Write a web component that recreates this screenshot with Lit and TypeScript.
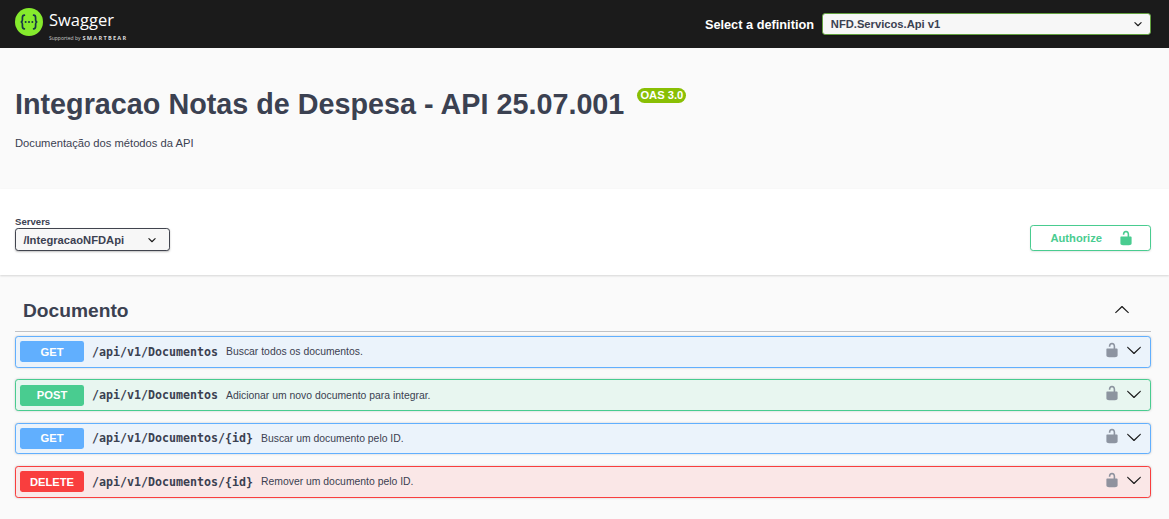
import { LitElement, html, css, svg } from "lit";
import { customElement } from "lit/decorators.js";

const chevron = svg`<path d="M17.418 6.109c.272-.268.709-.268.979 0s.271.701 0 .969l-7.908 7.83c-.27.268-.707.268-.979 0l-7.908-7.83c-.27-.268-.27-.701 0-.969.271-.268.709-.268.979 0L10 13.25l7.418-7.141z"/>`;
const small = svg`<path d="M13.418 7.859a.695.695 0 0 1 .978 0 .68.68 0 0 1 0 .969l-3.908 3.83a.697.697 0 0 1-.979 0l-3.908-3.83a.68.68 0 0 1 0-.969.695.695 0 0 1 .978 0L10 11l3.418-3.141z"/>`;
const lock = svg`<path d="M15.8 8H14V5.6C14 2.703 12.665 1 10 1 7.334 1 6 2.703 6 5.6V6h2v-.801C8 3.754 8.797 3 10 3c1.203 0 2 .754 2 2.199V8H4c-.553 0-1 .646-1 1.199V17c0 .549.428 1.139.951 1.307l1.197.387C5.672 18.861 6.55 19 7.1 19h5.8c.549 0 1.428-.139 1.951-.307l1.196-.387c.524-.167.953-.757.953-1.306V9.199C17 8.646 16.352 8 15.8 8z"/>`;

const ops = [
  { m: "GET", c: "get", p: "/api/v1/Documentos", s: "Buscar todos os documentos." },
  { m: "POST", c: "post", p: "/api/v1/Documentos", s: "Adicionar um novo documento para integrar." },
  { m: "GET", c: "get", p: "/api/v1/Documentos/{id}", s: "Buscar um documento pelo ID." },
  { m: "DELETE", c: "del", p: "/api/v1/Documentos/{id}", s: "Remover um documento pelo ID." },
];

@customElement("app-root")
export class AppRoot extends LitElement {
  static styles = css`
    :host { display: block; min-height: 519px; background: #fafafa; font-family: "Liberation Sans", Arial, sans-serif; color: #3b4151; overflow: hidden; }
    .topbar { height: 48px; background: #1b1b1b; display: flex; align-items: center; padding: 0 18px 0 15px; box-sizing: border-box; }
    .logo { display: flex; align-items: flex-start; gap: 6px; flex: 1; color: #fff; height: 48px; padding-top: 8px; box-sizing: border-box; }
    .logo svg { display: block; }
    .brand { display: flex; flex-direction: column; font-family: "Open Sans", sans-serif; }
    .brand .name { font-size: 16.5px; line-height: 22px; font-weight: 400; margin-top: 1px; white-space: nowrap; }
    .brand .sup { display: flex; align-items: baseline; gap: 2px; font-size: 5px; line-height: 8px; margin-top: 3px; color: #ccc; white-space: nowrap; }
    .brand .sup b { font-size: 5.6px; font-weight: 700; letter-spacing: 1.25px; color: #ddd; }
    .deflabel { color: #fff; font-weight: 700; font-size: 12.75px; margin-right: 8px; }
    .defsel { width: 329px; height: 22px; box-sizing: border-box; border: 1.6px solid #62a03f; border-radius: 3.2px; background: #f7f7f7; display: flex; align-items: center; justify-content: space-between; padding: 0 4px 0 7.8px; font-weight: 700; font-size: 11.2px; box-shadow: 0 1px 2px rgba(0,0,0,.25); }
    .defsel svg, .srvsel svg { width: 16px; height: 16px; fill: #1b1b1b; display: block; }
    .info { height: 141px; box-sizing: border-box; padding: 0 15px; overflow: hidden; }
    .title { display: flex; align-items: flex-start; margin: 40px 0 0; font-size: 28.75px; line-height: 33px; font-weight: 700; white-space: nowrap; }
    .badge { background: #89bf04; color: #fff; font-size: 11.2px; line-height: 13px; font-weight: 700; height: 15px; padding: 1px 3px; box-sizing: border-box; border-radius: 46px; margin: 0 0 0 13px; width: 49px; text-align: center; white-space: nowrap; font-family: "Liberation Sans", sans-serif; }
    .desc { font-size: 11.2px; line-height: 14px; margin-top: 15px; }
    .scheme { height: 86px; box-sizing: border-box; background: #fff; box-shadow: 0 1px 2px rgba(0,0,0,.15); padding: 27px 18px 0 15px; display: flex; justify-content: space-between; align-items: flex-start; }
    .srvlabel { font-size: 9.6px; line-height: 12px; font-weight: 700; }
    .srvsel { width: 155px; height: 23px; box-sizing: border-box; border: 1.6px solid #41444e; border-radius: 3.2px; background: #f7f7f7; display: flex; align-items: center; justify-content: space-between; padding: 0 9px 0 7.4px; font-weight: 700; font-size: 11.2px; box-shadow: 0 1px 2px rgba(0,0,0,.25); }
    .auth { width: 121px; height: 26px; margin-top: 9px; box-sizing: border-box; border: 1.6px solid #49cc90; border-radius: 3.2px; color: #49cc90; font-weight: 700; font-size: 11.2px; display: flex; align-items: center; justify-content: flex-end; gap: 16px; padding-right: 16px; box-shadow: 0 1px 2px rgba(0,0,0,.1); background: #fff; }
    .auth svg { width: 16px; height: 16px; fill: #49cc90; display: block; }
    .content { padding: 0 18px 0 15px; }
    .tag { height: 57px; box-sizing: border-box; border-bottom: 1px solid rgba(59,65,81,.3); display: flex; align-items: center; justify-content: space-between; padding: 13px 21px 0 8px; }
    .tag h3 { font-size: 19.2px; line-height: 24px; font-weight: 700; margin: 0 0 -3px; }
    .tag svg { width: 16px; height: 16px; fill: #1b1b1b; transform: rotate(180deg); display: block; }
    .ops { display: flex; flex-direction: column; padding-top: 4px; }
    .op { height: 31.6px; box-sizing: border-box; border: 1px solid; border-radius: 3.2px; display: flex; align-items: center; padding: 0 8px 0 4px; margin-bottom: 11.73px; box-shadow: 0 0 2.4px rgba(0,0,0,.19); }
    .op.get { border-color: #61affe; background: #ebf3fb; }
    .op.post { border-color: #49cc90; background: #e8f6f0; }
    .op.del { border-color: #f93e3e; background: #fae7e7; }
    .m { width: 64px; height: 21px; border-radius: 2.4px; color: #fff; font-size: 11.2px; font-weight: 700; display: flex; align-items: center; justify-content: center; flex: none; }
    .get .m { background: #61affe; }
    .post .m { background: #49cc90; }
    .del .m { background: #f93e3e; }
    .path { font-family: "DejaVu Sans Mono", monospace; font-size: 11.63px; font-weight: 700; margin-left: 8px; white-space: nowrap; }
    .sum { font-size: 10.4px; margin-left: 8px; flex: 1; white-space: nowrap; }
    .l { width: 16px; height: 16px; fill: #7d8492; opacity: .85; display: block; margin-top: -4px; }
    .c { width: 16px; height: 16px; fill: #1b1b1b; display: block; margin-left: 6px; margin-top: -3px; }
  `;

  render() {
    return html`
      <div class="topbar">
        <div class="logo">
          <svg width="28" height="28" viewBox="0 0 28 28">
            <circle cx="14" cy="14" r="14" fill="#85ea2d"/>
            <g fill="none" stroke="#173646" stroke-width="1.7" stroke-linecap="round">
              <path d="M9.4 7.2c-1.9 0-2 1.1-2 2.5v2.3c0 1-.5 1.8-1.6 2 1.1.2 1.6 1 1.6 2v2.3c0 1.4.1 2.5 2 2.5"/>
              <path d="M18.6 7.2c1.9 0 2 1.1 2 2.5v2.3c0 1 .5 1.8 1.6 2-1.1.2-1.6 1-1.6 2v2.3c0 1.4-.1 2.5-2 2.5"/>
            </g>
            <g fill="#173646"><circle cx="10.6" cy="14" r="1"/><circle cx="14" cy="14" r="1"/><circle cx="17.4" cy="14" r="1"/></g>
          </svg>
          <div class="brand">
            <div class="name">Swagger</div>
            <div class="sup">Supported by <b>SMARTBEAR</b></div>
          </div>
        </div>
        <span class="deflabel">Select a definition</span>
        <div class="defsel"><span>NFD.Servicos.Api v1</span><svg viewBox="0 0 20 20">${small}</svg></div>
      </div>
      <section class="info">
        <h2 class="title">Integracao Notas de Despesa - API 25.07.001<span class="badge">OAS 3.0</span></h2>
        <div class="desc">Documentação dos métodos da API</div>
      </section>
      <section class="scheme">
        <div>
          <div class="srvlabel">Servers</div>
          <div class="srvsel"><span>/IntegracaoNFDApi</span><svg viewBox="0 0 20 20">${small}</svg></div>
        </div>
        <div class="auth"><span>Authorize</span><svg viewBox="0 0 20 20">${lock}</svg></div>
      </section>
      <section class="content">
        <div class="tag"><h3>Documento</h3><svg viewBox="0 0 20 20">${chevron}</svg></div>
        <div class="ops">
          ${ops.map((o) => html`
            <div class="op ${o.c}">
              <span class="m">${o.m}</span>
              <span class="path">${o.p}</span>
              <span class="sum">${o.s}</span>
              <svg class="l" viewBox="0 0 20 20">${lock}</svg>
              <svg class="c" viewBox="0 0 20 20">${chevron}</svg>
            </div>`)}
        </div>
      </section>
    `;
  }
}
